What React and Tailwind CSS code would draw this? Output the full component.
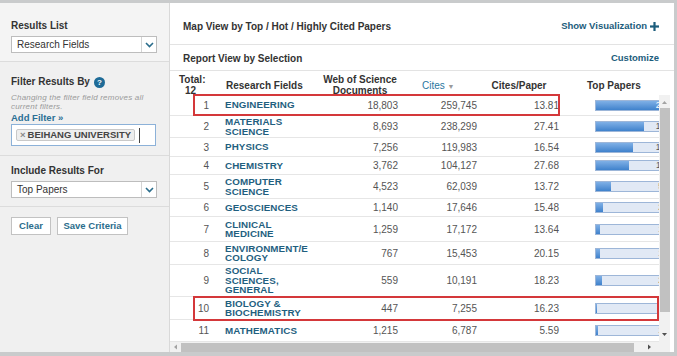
import React from 'react';

// =============================================================================
// DATA
// =============================================================================

const ROWS = [
  { n: 1, field: ['ENGINEERING'], docs: '18,803', cites: '259,745', cpp: '13.81', top: '24', fill: 131, h: 21 },
  { n: 2, field: ['MATERIALS', 'SCIENCE'], docs: '8,693', cites: '238,299', cpp: '27.41', top: '16', fill: 48, h: 22 },
  { n: 3, field: ['PHYSICS'], docs: '7,256', cites: '119,983', cpp: '16.54', top: '12', fill: 37, h: 19 },
  { n: 4, field: ['CHEMISTRY'], docs: '3,762', cites: '104,127', cpp: '27.68', top: '11', fill: 33, h: 18 },
  { n: 5, field: ['COMPUTER', 'SCIENCE'], docs: '4,523', cites: '62,039', cpp: '13.72', top: '5', fill: 15, h: 24 },
  { n: 6, field: ['GEOSCIENCES'], docs: '1,140', cites: '17,646', cpp: '15.48', top: '2', fill: 7, h: 18 },
  { n: 7, field: ['CLINICAL', 'MEDICINE'], docs: '1,259', cites: '17,172', cpp: '13.64', top: '1', fill: 4, h: 25 },
  { n: 8, field: ['ENVIRONMENT/E', 'COLOGY'], docs: '767', cites: '15,453', cpp: '20.15', top: '1', fill: 4, h: 23 },
  { n: 9, field: ['SOCIAL', 'SCIENCES,', 'GENERAL'], docs: '559', cites: '10,191', cpp: '18.23', top: '2', fill: 6, h: 32 },
  { n: 10, field: ['BIOLOGY &', 'BIOCHEMISTRY'], docs: '447', cites: '7,255', cpp: '16.23', top: '0', fill: 1, h: 23 },
  { n: 11, field: ['MATHEMATICS'], docs: '1,215', cites: '6,787', cpp: '5.59', top: '1', fill: 2, h: 22 },
];

const GRID = 'grid grid-cols-[51px_98px_80px_80px_82px_98px]';

// =============================================================================
// SUB-COMPONENTS
// =============================================================================

const Chevron = () => (
  <svg width="9" height="6" viewBox="0 0 9 6">
    <polyline points="1,1 4.5,4.5 8,1" fill="none" stroke="#2b6d8c" strokeWidth="1.6" />
  </svg>
);

const SelectBox = ({ label }) => (
  <div className="flex h-[17px] bg-white border border-[#bdbdbd]">
    <div className="flex-1 pl-[5px] text-[10px] leading-[15px] text-[#333]">{label}</div>
    <div className="w-[15px] border-l border-[#d4d4d4] flex items-center justify-center">
      <Chevron />
    </div>
  </div>
);

const Heading = ({ children }) => (
  <div className="text-[10px] leading-[12px] font-bold text-[#333]">{children}</div>
);

const Sidebar = () => (
  <aside className="w-[170px] shrink-0 bg-[#f0f0f0] border-r border-[#d9d9d9] flex flex-col">
    {/* Results list */}
    <div className="h-[59px] bg-[#f4f4f4] border-b border-[#dcdcdc] px-[11px] pt-[17px]">
      <Heading>Results List</Heading>
      <div className="mt-[4px] w-[146px]">
        <SelectBox label="Research Fields" />
      </div>
    </div>

    {/* Filter */}
    <div className="border-b border-[#dcdcdc] px-[11px] pt-[14px] pb-[9px]">
      <div className="flex items-center gap-[4px]">
        <Heading>Filter Results By</Heading>
        <span className="w-[11px] h-[11px] rounded-full bg-[#1e6b97] text-white text-[8px] leading-[11px] font-bold text-center">
          ?
        </span>
      </div>
      <p className="mt-[6px] text-[8px] leading-[8.5px] tracking-[0.2px] italic text-[#9a9a9a] whitespace-nowrap">
        Changing the filter field removes all
        <br />
        current filters.
      </p>
      <div className="mt-[1px] text-[9.5px] leading-[12px] font-bold text-[#2a6f94]">Add Filter »</div>
      <div className="w-[145px] h-[22px] bg-white border border-[#8cb1d8] flex items-center pl-[4px] gap-[4px]">
        <span className="h-[12px] px-[3px] bg-[#eeeeee] border border-[#c9c9c9] rounded-[2px] text-[9.5px] leading-[10px] font-bold text-[#444] whitespace-nowrap">
          <span className="text-[#888] mr-[2px]">×</span>BEIHANG UNIVERSITY
        </span>
        <span className="w-px h-[15px] bg-[#444]" />
      </div>
    </div>

    {/* Include results */}
    <div className="border-b border-[#dcdcdc] px-[11px] pt-[9px] pb-[8px]">
      <Heading>Include Results For</Heading>
      <div className="mt-[4px] w-[146px]">
        <SelectBox label="Top Papers" />
      </div>
    </div>

    {/* Actions */}
    <div className="flex gap-[6px] px-[11px] pt-[10px]">
      <button className="w-[40px] h-[18px] bg-white border border-[#c2c2c2] text-[9.5px] font-bold text-[#2b6d8c]">
        Clear
      </button>
      <button className="w-[71px] h-[18px] bg-white border border-[#c2c2c2] text-[9.5px] font-bold text-[#2b6d8c]">
        Save Criteria
      </button>
    </div>
  </aside>
);

const TopBar = ({ value, fill, first }) => (
  <div className="relative w-[131px] h-[11px] bg-[#e1e9f5] border border-[#9db6d8] overflow-hidden">
    <div
      className="absolute left-0 top-0 bottom-0 bg-gradient-to-b from-[#7fb0e6] to-[#3f82cc]"
      style={{ width: fill }}
    />
    <div
      className={`relative text-center text-[8.5px] leading-[9px] ${first ? 'text-white' : 'text-[#555]'}`}
    >
      {value}
    </div>
  </div>
);

const TableRow = ({ row }) => (
  <div className={`${GRID} border-b border-[#e6e6e6] items-center overflow-hidden`} style={{ height: row.h }}>
    <div className="text-right pr-[12px] text-[10px] text-[#555]">{row.n}</div>
    <div className="pl-[4px] text-[9.8px] leading-[9.5px] font-bold tracking-[0.1px] text-[#1f5f7f] whitespace-nowrap">
      {row.field.map((line) => (
        <div key={line}>{line}</div>
      ))}
    </div>
    <div className="text-right pr-[1px] text-[10px] text-[#555]">{row.docs}</div>
    <div className="text-right pr-[2px] text-[10px] text-[#555]">{row.cites}</div>
    <div className="text-right pr-[2px] text-[10px] text-[#555]">{row.cpp}</div>
    <div className="pl-[34px] overflow-hidden">
      <TopBar value={row.top} fill={row.fill} first={row.n === 1} />
    </div>
  </div>
);

const VScroll = () => (
  <div className="w-[11px] bg-[#f1f1f1] flex flex-col items-center">
    <svg width="7" height="11" viewBox="0 0 7 11" className="mt-[2px]">
      <polygon points="3.5,4 6,7 1,7" fill="#a3a3a3" />
    </svg>
    <div className="w-[10px] h-[204px] bg-[#c1c1c1]" />
    <div className="flex-1" />
    <svg width="7" height="11" viewBox="0 0 7 11" className="mb-[2px]">
      <polygon points="1,4 6,4 3.5,7" fill="#505050" />
    </svg>
  </div>
);

const HScroll = () => (
  <div className="h-[10px] flex">
    <div className="w-[489px] bg-[#f1f1f1] flex items-center">
      <svg width="11" height="10" viewBox="0 0 11 10">
        <polygon points="4,5 7,2.5 7,7.5" fill="#a3a3a3" />
      </svg>
      <div className="w-[453px] h-[9px] bg-[#c1c1c1]" />
      <div className="flex-1" />
      <svg width="11" height="10" viewBox="0 0 11 10" className="mr-[4px]">
        <polygon points="7,5 4,2.5 4,7.5" fill="#505050" />
      </svg>
    </div>
    <div className="w-[11px] bg-[#f1f1f1]" />
  </div>
);

const Plus = () => (
  <svg width="9" height="9" viewBox="0 0 9 9" className="ml-[3px]">
    <rect x="3.4" y="0" width="2.2" height="9" fill="#1c5d7c" />
    <rect x="0" y="3.4" width="9" height="2.2" fill="#1c5d7c" />
  </svg>
);

// =============================================================================
// MAIN COMPONENT
// =============================================================================

export default function App() {
  return (
    <div className="w-[677px] h-[356px] bg-[#c9cbcc] pt-[3px] pr-[3px] pb-[4px] flex font-['Liberation_Sans',Arial,sans-serif] overflow-hidden">
      <Sidebar />

      <main className="flex-1 bg-white flex flex-col min-w-0">
        {/* Map view header */}
        <div className="h-[42px] shrink-0 border-b border-[#e3e3e3] flex items-center justify-between pl-[13px] pr-[15px] pt-[5px]">
          <span className="text-[10px] font-bold text-[#333]">Map View by Top / Hot / Highly Cited Papers</span>
          <span className="flex items-center text-[9.5px] font-bold text-[#1c5d7c]">
            Show Visualization
            <Plus />
          </span>
        </div>

        {/* Report view header */}
        <div className="h-[26px] shrink-0 border-b border-[#e3e3e3] flex items-center justify-between pl-[13px] pr-[15px] pt-[2px]">
          <span className="text-[10px] font-bold text-[#333]">Report View by Selection</span>
          <span className="text-[9.5px] font-bold text-[#1c5d7c]">Customize</span>
        </div>

        {/* Table */}
        <div className="relative flex-1 min-h-0 flex flex-col">
          <div className={`${GRID} h-[24px] shrink-0 pt-[3px] text-[10px] leading-[11px] font-bold text-[#333] overflow-hidden`}>
            <div className="pl-[9px]">
              Total:
              <div className="pl-[6px]">12</div>
            </div>
            <div className="pl-[5px] pt-[6px]">Research Fields</div>
            <div className="text-center pl-[2px]">
              Web of Science
              <br />
              Documents
            </div>
            <div className="pl-[23px] pt-[6px] font-normal text-[#2a76a0]">
              Cites <span className="text-[#9a9a9a] text-[7px]">▼</span>
            </div>
            <div className="text-center pt-[6px] pr-[2px]">Cites/Paper</div>
            <div className="pl-[26px] pt-[6px] whitespace-nowrap">Top Papers</div>
          </div>

          <div className="flex flex-1 min-h-0">
            <div className="w-[489px] overflow-hidden">
              {ROWS.map((row) => (
                <TableRow key={row.n} row={row} />
              ))}
            </div>
            <VScroll />
            <div className="flex-1" />
          </div>

          {/* Highlight boxes */}
          <div className="absolute left-[23px] top-[23px] w-[367px] h-[22px] border-2 border-[#d4383a]" />
          <div className="absolute left-[23px] top-[225px] w-[466px] h-[25px] border-2 border-[#d4383a]" />
        </div>

        <HScroll />
      </main>
    </div>
  );
}
